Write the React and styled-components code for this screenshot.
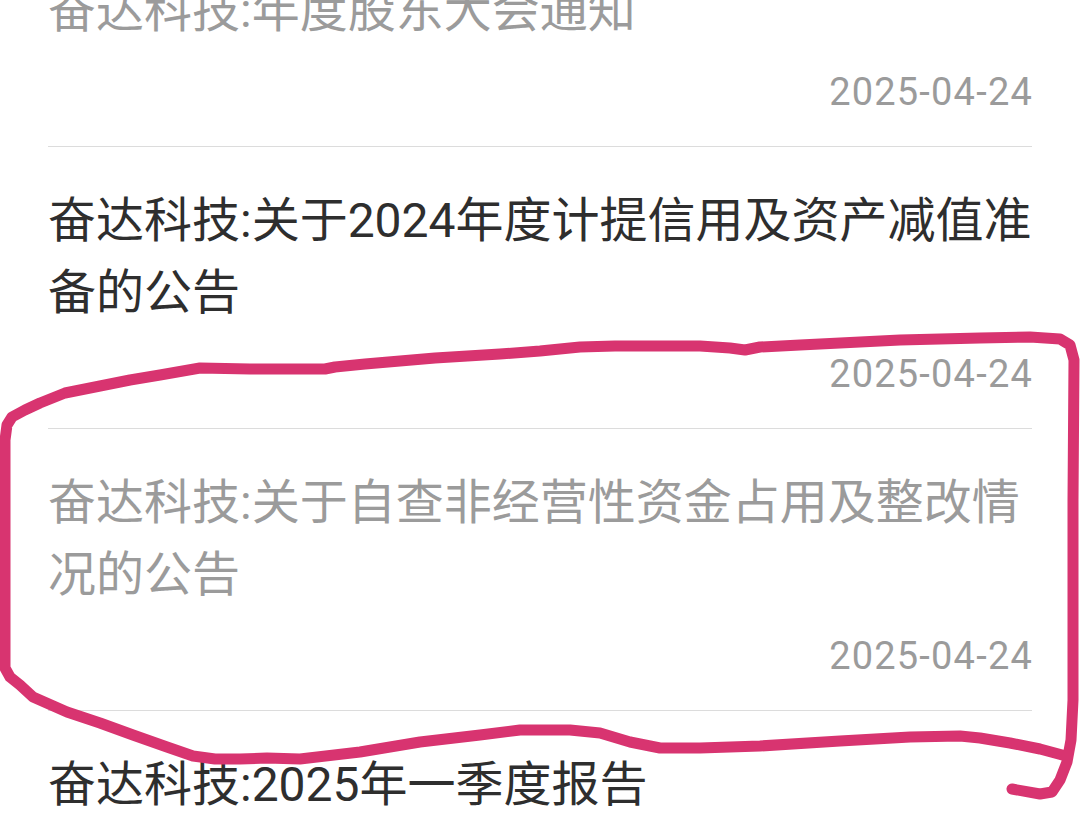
import React from "react";
import styled, { createGlobalStyle } from "styled-components";

const notices = [
  { id: 1, title: "奋达科技:年度股东大会通知", date: "2025-04-24", read: true },
  { id: 2, title: "奋达科技:关于2024年度计提信用及资产减值准备的公告", date: "2025-04-24", read: false },
  { id: 3, title: "奋达科技:关于自查非经营性资金占用及整改情况的公告", date: "2025-04-24", read: true },
  { id: 4, title: "奋达科技:2025年一季度报告", date: "2025-04-24", read: false },
];

// hand drawn marker loop around the third notice
const loop =
  "M 1012 789 L 1040 794 L 1052 792 L 1060 780 L 1067 762 L 1071 740 L 1073 700 L 1073 500 L 1074 360 L 1070 345 L 1060 339 L 1030 337 L 980 338 L 900 340 L 800 345 L 760 347 L 745 350 L 730 348 L 700 346 L 615 346 L 580 347 L 540 351 L 500 354 L 435 358 L 365 364 L 335 367 L 325 369 L 250 369 L 200 368 L 160 375 L 130 380 L 100 386 L 65 393 L 40 403 L 25 410 L 12 417 L 7 425 L 5 440 L 5 668 L 10 677 L 20 685 L 33 697 L 67 712 L 100 723 L 133 735 L 167 747 L 193 756 L 215 759 L 240 759 L 267 758 L 300 759 L 360 752 L 420 742 L 480 735 L 520 730 L 570 730 L 600 733 L 630 742 L 660 748 L 700 748 L 760 746 L 840 741 L 910 737 L 960 736 L 980 738 L 1010 743 L 1040 749 L 1066 756";

export default function App() {
  return (
    <>
      <GlobalStyle />
      <Page>
        <List>
          {notices.map((n) => (
            <Item key={n.id}>
              <Title $read={n.read}>{n.title}</Title>
              <DateText>{n.date}</DateText>
            </Item>
          ))}
        </List>
        <Marker viewBox="0 0 1080 838">
          <path d={loop} />
        </Marker>
      </Page>
    </>
  );
}

const GlobalStyle = createGlobalStyle`
  html, body {
    margin: 0;
    padding: 0;
    background: #ffffff;
    overflow: hidden;
  }
`;

const Page = styled.div`
  position: relative;
  width: 1080px;
  height: 838px;
  overflow: hidden;
  background: #ffffff;
  font-family: Roboto, "Noto Sans CJK SC", sans-serif;
`;

const List = styled.div`
  display: flex;
  flex-direction: column;
  margin-top: -63px;
  padding: 0 48px;
`;

const Item = styled.div`
  display: flex;
  flex-direction: column;
  padding: 38px 0 32px;
  border-bottom: 1px solid #dcdcdc;
`;

const Title = styled.div`
  font-size: 48px;
  line-height: 72px;
  margin-right: -6px;
  color: ${(p) => (p.$read ? "#9b9b9b" : "#2e2e2e")};
`;

const DateText = styled.div`
  margin-top: 23px;
  margin-right: -1px;
  align-self: flex-end;
  font-size: 38px;
  line-height: 44px;
  letter-spacing: 1.2px;
  color: #9b9b9b;
`;

const Marker = styled.svg`
  position: absolute;
  top: 0;
  left: 0;
  width: 1080px;
  height: 838px;
  pointer-events: none;

  path {
    fill: none;
    stroke: #d83470;
    stroke-width: 11;
    stroke-linecap: round;
    stroke-linejoin: round;
  }
`;
